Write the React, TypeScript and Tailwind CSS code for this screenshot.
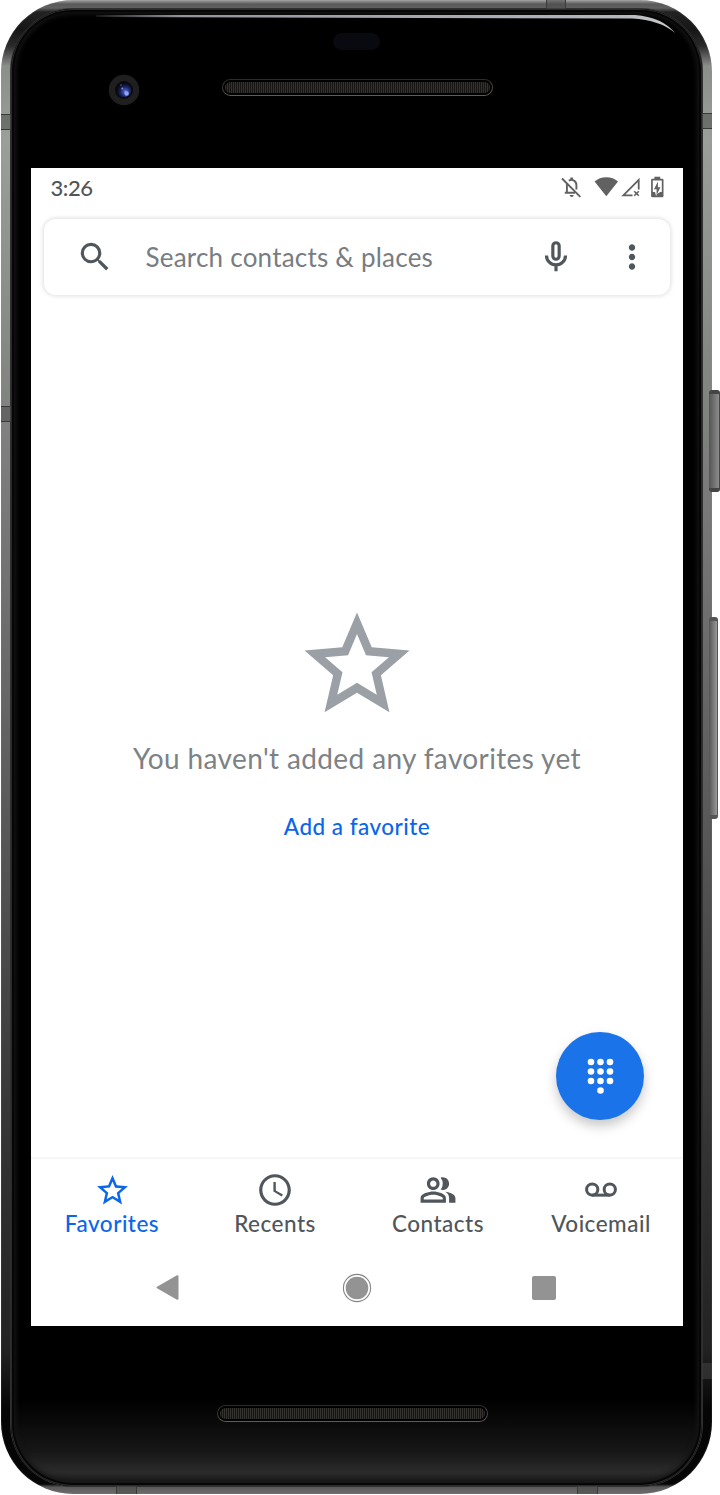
import React from "react";
import {
  MdSearch,
  MdMoreVert,
  MdStarBorder,
  MdAccessTime,
  MdOutlinePeopleAlt,
} from "react-icons/md";

function Speaker() {
  return (
    <div className="h-[17px] w-[271px] rounded-full border border-t-[#2c2c2b] border-r-[#4a4a49] border-b-[#5c5c5a] border-l-[#3a3a39] bg-black p-[2px]">
      <div className="h-full w-full rounded-full bg-[repeating-linear-gradient(90deg,#34322e_0px,#34322e_1px,#161513_1px,#161513_2px)]" />
    </div>
  );
}

function Camera() {
  return (
    <svg width="32" height="32" viewBox="0 0 32 32">
      <defs>
        <radialGradient id="lens" cx="0.6" cy="0.62" r="0.6">
          <stop offset="0" stopColor="#7f93e6" />
          <stop offset="0.25" stopColor="#3b4da8" />
          <stop offset="0.6" stopColor="#18215a" />
          <stop offset="1" stopColor="#060814" />
        </radialGradient>
      </defs>
      <circle cx="16" cy="16" r="15.3" fill="#1f1f1f" />
      <circle cx="16" cy="16" r="9" fill="#0a0a0a" />
      <circle cx="16" cy="16" r="7.3" fill="url(#lens)" />
      <circle cx="18.6" cy="19.5" r="2.2" fill="#8fa5f0" />
      <circle cx="14.3" cy="14.5" r="1" fill="#7f8fd0" />
      <circle cx="13" cy="11" r="0.8" fill="#5563a0" />
    </svg>
  );
}

function StatusIcons() {
  return (
    <svg width="106" height="24" viewBox="560 175 106 24" fill="#616161">
      <g fill="none" stroke="#616161" strokeWidth="1.9">
        <path d="M562 178.5L580.3 196.8" />
        <path d="M568.8 180.6Q571.7 179.2 574 180.6Q576.4 182 576.4 185V189.5" />
        <path d="M566.9 184V192.8H575M564.8 192.8H567" />
      </g>
      <path d="M570.3 177.6h2.6v3h-2.6zM569.6 195h4.2q-.4 1.9-2.1 1.9t-2.1-1.9z" />
      <path d="M606.3 196.2L594.6 181.6Q599.3 177.2 606.3 177.2T618 181.6Z" />
      <path d="M632.5 195.3H623.4L638.7 179.9V189.5" fill="none" stroke="#616161" strokeWidth="1.8" />
      <path d="M634.2 191.2l4.6 4.6M638.8 191.2l-4.6 4.6" stroke="#616161" strokeWidth="1.6" />
      <path
        fillRule="evenodd"
        d="M654.4 176.7h5.8v2h2q1.3 0 1.3 1.3v16q0 1.3-1.3 1.3h-9.8q-1.3 0-1.3-1.3v-16q0-1.3 1.3-1.3h2zM652.8 180.4v11.6h2.2l1 3.6.6 0v-6.4h-2.6l3.9-7.6v5.6h2.5l-3.3 6.8 3.2-2h1.5v-11.6z"
      />
    </svg>
  );
}

function MicIcon() {
  return (
    <svg width="38" height="38" viewBox="0 0 24 24" fill="none" stroke="currentColor" strokeWidth="2">
      <rect x="10" y="3" width="4" height="10.4" rx="2" />
      <path d="M6 11a6 6 0 0 0 12 0M12 17v4" />
    </svg>
  );
}

function VoicemailIcon() {
  return (
    <svg width="38" height="38" viewBox="0 0 24 24" fill="none" stroke="currentColor" strokeWidth="1.9">
      <circle cx="6.45" cy="11.7" r="3.55" />
      <circle cx="17.55" cy="11.7" r="3.55" />
      <path d="M6.45 15.25H17.55" />
    </svg>
  );
}

function DialpadIcon() {
  const dots = [
    [4, 4], [13.5, 4], [23, 4],
    [4, 13.5], [13.5, 13.5], [23, 13.5],
    [4, 23], [13.5, 23], [23, 23],
    [13.5, 32.5],
  ];
  return (
    <svg width="27" height="37" viewBox="0 0 27 37" fill="#fff">
      {dots.map(([x, y]) => (
        <circle key={`${x}-${y}`} cx={x} cy={y} r="3.3" />
      ))}
    </svg>
  );
}

function Tab({ label, icon, active }: { label: string; icon: React.ReactNode; active?: boolean }) {
  return (
    <div className={`flex flex-1 flex-col items-center ${active ? "text-[#0b66ea]" : "text-[#50565b]"}`}>
      <div className="flex h-[38px] items-center justify-center">{icon}</div>
      <span className="mt-[1px] text-[22.5px] leading-[28px] font-medium tracking-[0.5px] whitespace-nowrap">{label}</span>
    </div>
  );
}

function Screen() {
  return (
    <div className="flex h-[1158px] w-[652px] flex-col bg-white">
      <div className="flex h-[51px] items-start justify-between pt-[7px] pr-[17px] pl-[20px]">
        <span className="text-[22px] leading-[25px] font-medium tracking-[-0.4px] text-[#555]">3:26</span>
        <StatusIcons />
      </div>
      <div className="mx-[13px] flex h-[76px] items-center rounded-[12px] bg-white pr-[19px] pl-[32px] text-[#50575c] shadow-[0_0_4px_1px_rgba(0,0,0,0.13)]">
        <MdSearch size={38} />
        <span className="ml-[32px] flex-1 text-[26px] tracking-[0.22px] whitespace-nowrap text-[#777d82]">
          Search contacts &amp; places
        </span>
        <div className="mr-[38px]">
          <MicIcon />
        </div>
        <MdMoreVert size={38} />
      </div>
      <div className="relative flex flex-1 flex-col items-center pt-[307px]">
        <MdStarBorder size={126} color="#9aa0a6" />
        <p className="mt-[12px] pl-[1px] text-[28px] leading-[36px] tracking-[0.38px] whitespace-nowrap text-[#7d8286]">
          You haven't added any favorites yet
        </p>
        <button className="mt-[37px] pl-[1px] text-[22.5px] leading-[28px] font-medium tracking-[0.47px] text-[#0b66ea]">
          Add a favorite
        </button>
        <div className="absolute right-[38.5px] bottom-[37px] flex h-[88px] w-[88px] items-center justify-center rounded-full bg-[#1a73e8] pl-[1px] shadow-[0_6px_12px_rgba(0,0,0,0.22)]">
          <DialpadIcon />
        </div>
      </div>
      <div className="flex h-[92px] border-t-2 border-[#f6f6f6] pt-[12px]">
        <Tab active label="Favorites" icon={<MdStarBorder size={37} />} />
        <Tab label="Recents" icon={<MdAccessTime size={38} />} />
        <Tab label="Contacts" icon={<MdOutlinePeopleAlt size={38} />} />
        <Tab label="Voicemail" icon={<VoicemailIcon />} />
      </div>
      <div className="flex h-[77px] items-center pl-[124px]">
        <svg width="24" height="27" viewBox="0 0 24 27" className="mb-[1px]">
          <path d="M2.5 13.5L22.5 2.2V24.8Z" fill="#939393" stroke="#939393" strokeWidth="2" strokeLinejoin="round" />
        </svg>
        <svg width="30" height="30" viewBox="0 0 30 30" className="ml-[163px]">
          <circle cx="15" cy="15" r="13.6" fill="none" stroke="#858585" strokeWidth="1.1" />
          <circle cx="15" cy="15" r="11.3" fill="#939393" />
        </svg>
        <div className="ml-[160.5px] h-[24px] w-[24px] rounded-[2px] bg-[#939393]" />
      </div>
    </div>
  );
}

export default function App() {
  return (
    <div className="relative h-[1495px] w-[720px] overflow-hidden bg-white font-['Lato','Open_Sans',sans-serif]">
      <div className="absolute top-[390px] left-[709px] h-[102px] w-[11px] rounded-[3px] border-y-4 border-r border-[#444] bg-linear-to-r from-[#555] to-[#8d8d8d]" />
      <div className="absolute top-[617px] left-[709px] h-[202px] w-[9px] rounded-[3px] border-y-4 border-r border-[#555] bg-linear-to-r from-[#555] to-[#999]" />
      <div className="ml-[1px] h-[1494px] w-[711px] rounded-[72px] bg-[linear-gradient(180deg,#a5a5a5_0px,#5a5a5a_4px,#606060_8px,#222_12px,#161616_30px,#2a2a2a_46px,#8c8e8c_66px,#9c9e9c_140px,#868886_350px,#686868_680px,#505050_900px,#333_1150px,#222_1350px,#050505_1410px,#050505_1484px,#5a5858_1487px,#6f6d6d_1494px)] p-[10px] pt-[9px] pb-[8px] shadow-[inset_0_0_1px_1px_rgba(150,150,150,0.12)]">
        <div className="flex h-full w-full flex-col items-center rounded-[62px] bg-[linear-gradient(180deg,#000_1390px,#161616_1442px,#2b2b2b_1463px,#151515_1477px)] shadow-[inset_0_0_0_1px_#2a2a2b,inset_0_0_0_3px_#060606,inset_0_0_5px_5px_#151515,0_0_0_1px_#303030]">
          <div className="relative flex h-[159px] w-[652px] shrink-0 flex-col items-center pt-[24px]">
            <div className="h-[17px] w-[47px] rounded-full bg-[#090a0f]" />
            <div className="mt-[29px] ml-[2px]">
              <Speaker />
            </div>
            <div className="absolute top-[65px] left-[77px]">
              <Camera />
            </div>
          </div>
          <Screen />
          <div className="flex w-full flex-1 justify-center pt-[79px] pr-[8px]">
            <Speaker />
          </div>
        </div>
      </div>
      <svg className="absolute top-0 left-0" width="720" height="1495" viewBox="0 0 720 1495">
        <defs>
          <linearGradient id="glare" x1="0" x2="1">
            <stop offset="0" stopColor="#b9b9c2" stopOpacity="0.1" />
            <stop offset="0.15" stopColor="#94949e" />
            <stop offset="0.9" stopColor="#b4b6bc" />
            <stop offset="1" stopColor="#ccc" />
          </linearGradient>
        </defs>
        <path d="M96 15H635Q662 17 675 33Q660 20 632 18.5L96 17Z" fill="url(#glare)" />
        <g fill="#4a4c4a" fillOpacity="0.55">
          <rect x="1" y="114" width="10" height="16" />
          <rect x="702" y="113" width="10" height="16" />
          <rect x="1" y="406" width="10" height="16" />
          <rect x="546" y="0" width="20" height="9" />
          <rect x="116" y="1486" width="21" height="8" />
          <rect x="577" y="1486" width="21" height="8" />
          <rect x="702" y="1363" width="10" height="16" fill="#444" />
        </g>
        <g stroke="#3a3a3a" strokeWidth="1">
          <path d="M1 114.5H11M1 129.5H11M702 113.5H712M702 128.5H712M1 406.5H11M1 421.5H11" />
          <path d="M546.5 0V9M565.5 0V9M116.5 1486V1494M136.5 1486V1494M577.5 1486V1494M597.5 1486V1494" />
        </g>
      </svg>
    </div>
  );
}
